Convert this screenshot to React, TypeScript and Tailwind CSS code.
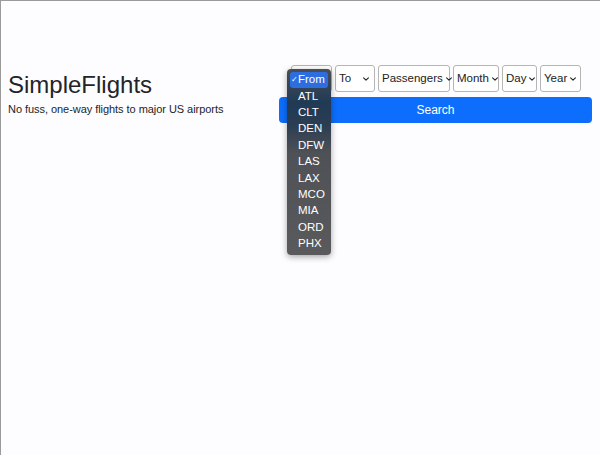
import React from 'react';

const Chevron: React.FC = () => (
    <svg width="8" height="8" viewBox="0 0 10 10" fill="none" stroke="currentColor" strokeWidth="1.4" strokeLinecap="round" strokeLinejoin="round" className="shrink-0">
        <polyline points="2 3.5 5 6.5 8 3.5"></polyline>
    </svg>
);

const FakeSelect: React.FC<{ label: string; className?: string }> = ({ label, className }) => (
    <div className={`h-[27px] flex items-center justify-between gap-[2px] pl-[3px] pr-[4px] bg-white border border-[#b5b5b5] rounded-[3px] text-[11.5px] text-[#222] ${className ?? ''}`}>
        <span className="whitespace-nowrap">{label}</span>
        <Chevron />
    </div>
);

const airports = ['ATL', 'CLT', 'DEN', 'DFW', 'LAS', 'LAX', 'MCO', 'MIA', 'ORD', 'PHX'];

export default function App() {
    return (
        <div className="w-[600px] h-[455px] bg-[#fdfcfe] border-t border-l border-[#9a9a9a] font-['Liberation_Sans',Arial,sans-serif] text-[#212529]">
            <div className="flex items-start pt-[64px]">
                <div className="w-[278px] pl-[7px] pt-[5px]">
                    <h1 className="text-[24px] leading-[29px] font-normal">SimpleFlights</h1>
                    <p className="text-[11px] leading-[14px] mt-[3px] tracking-[-0.05px]">No fuss, one-way flights to major US airports</p>
                </div>
                <div className="w-[313px] flex flex-col gap-[5px]">
                    <div className="flex gap-[3px] pl-[12px]">
                        <div className="relative">
                            <FakeSelect label="" className="w-[41px]" />
                            <div className="absolute left-[-4px] top-[4px] w-[44px] h-[186px] rounded-[4px] shadow-[0_2px_6px_rgba(0,0,0,0.35)] bg-[linear-gradient(to_bottom,#4b4e54_0%,#203a56_18%,#2b3d52_30%,#4e5156_45%,#5a5a5c_100%)] z-10 pt-[3px] px-[3px] text-[11.5px] text-white">
                                <div className="h-[16px] flex items-center bg-[#2d6de0] rounded-[3px] pl-[1px]">
                                    <span className="text-[8px] w-[7px]">✓</span>
                                    <span>From</span>
                                </div>
                                {airports.map((a) => (
                                    <div key={a} className="h-[16.4px] flex items-center pl-[8px]">{a}</div>
                                ))}
                            </div>
                        </div>
                        <FakeSelect label="To" className="w-[40px]" />
                        <FakeSelect label="Passengers" className="w-[72px]" />
                        <FakeSelect label="Month" className="w-[46px]" />
                        <FakeSelect label="Day" className="w-[35px]" />
                        <FakeSelect label="Year" className="w-[41px]" />
                    </div>
                    <button className="h-[26px] w-[313px] bg-[#0d6efd] text-white text-[12px] rounded-[4px]">Search</button>
                </div>
            </div>
        </div>
    );
}
